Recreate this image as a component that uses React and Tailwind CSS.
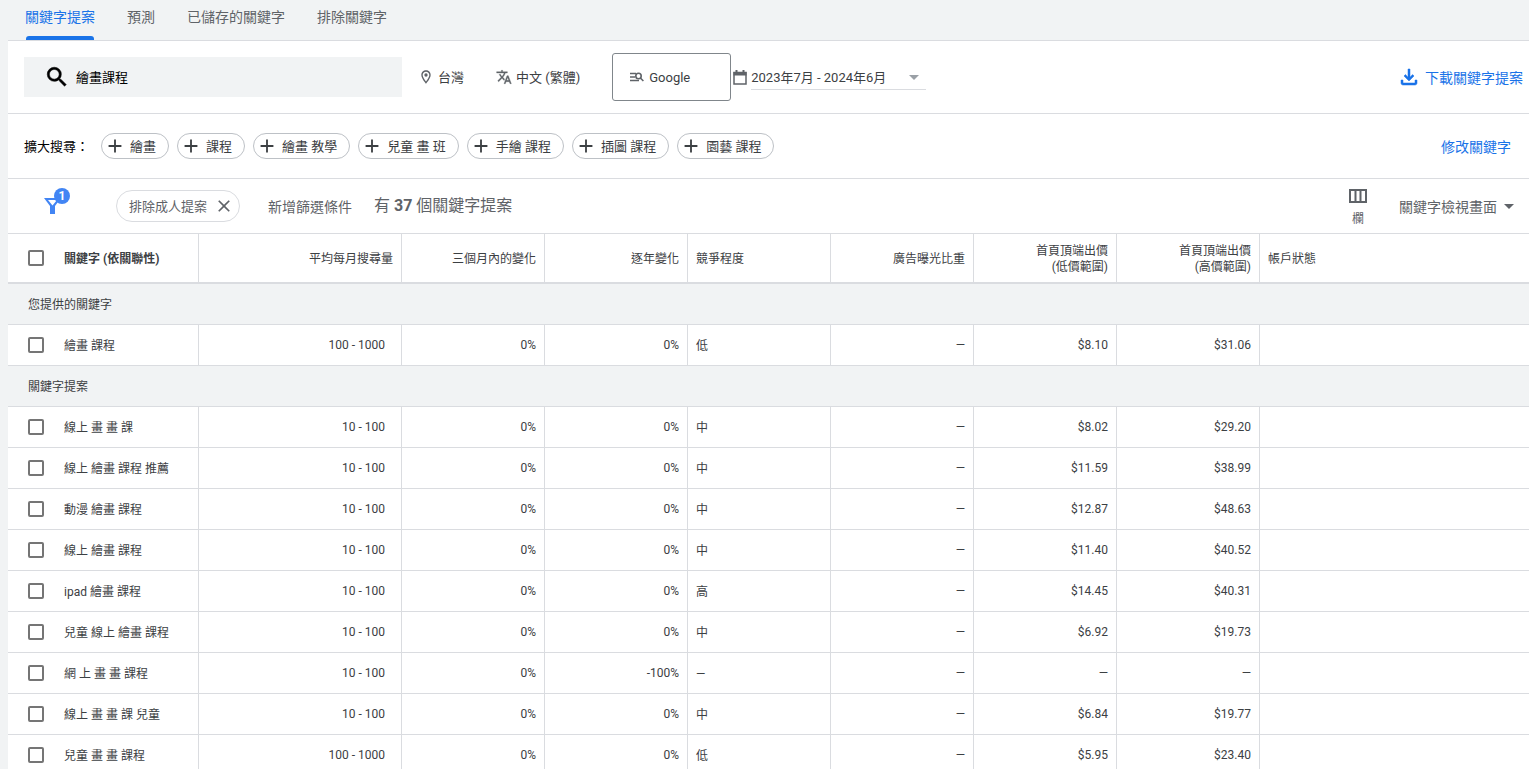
import { useState } from 'react';
import {
    MdSearch,
    MdOutlineLocationOn,
    MdTranslate,
    MdArrowDropDown,
    MdOutlineFileDownload,
    MdAdd,
    MdClose,
} from 'react-icons/md';

const tabs = ['關鍵字提案', '預測', '已儲存的關鍵字', '排除關鍵字'];

const suggestions = ['繪畫', '課程', '繪畫 教學', '兒童 畫 班', '手繪 課程', '插圖 課程', '園藝 課程'];

const provided = [
    { keyword: '繪畫 課程', volume: '100 - 1000', quarter: '0%', year: '0%', competition: '低', low: '$8.10', high: '$31.06' },
];

const ideas = [
    { keyword: '線上 畫 畫 課', volume: '10 - 100', quarter: '0%', year: '0%', competition: '中', low: '$8.02', high: '$29.20' },
    { keyword: '線上 繪畫 課程 推薦', volume: '10 - 100', quarter: '0%', year: '0%', competition: '中', low: '$11.59', high: '$38.99' },
    { keyword: '動漫 繪畫 課程', volume: '10 - 100', quarter: '0%', year: '0%', competition: '中', low: '$12.87', high: '$48.63' },
    { keyword: '線上 繪畫 課程', volume: '10 - 100', quarter: '0%', year: '0%', competition: '中', low: '$11.40', high: '$40.52' },
    { keyword: 'ipad 繪畫 課程', volume: '10 - 100', quarter: '0%', year: '0%', competition: '高', low: '$14.45', high: '$40.31' },
    { keyword: '兒童 線上 繪畫 課程', volume: '10 - 100', quarter: '0%', year: '0%', competition: '中', low: '$6.92', high: '$19.73' },
    { keyword: '網 上 畫 畫 課程', volume: '10 - 100', quarter: '0%', year: '-100%', competition: '—', low: '—', high: '—' },
    { keyword: '線上 畫 畫 課 兒童', volume: '10 - 100', quarter: '0%', year: '0%', competition: '中', low: '$6.84', high: '$19.77' },
    { keyword: '兒童 畫 畫 課程', volume: '100 - 1000', quarter: '0%', year: '0%', competition: '低', low: '$5.95', high: '$23.40' },
];

const checkboxClass =
    'block size-4 shrink-0 appearance-none rounded-[2px] border-2 border-[#757575] bg-white checked:border-[#1a73e8] checked:bg-[#1a73e8]';

function NetworkIcon() {
    return (
        <svg viewBox="0 0 14 10" className="h-[10px] w-[14px]" fill="none" stroke="#5f6368" strokeWidth="1.6" aria-hidden="true">
            <path d="M0 1.5h6M0 5h5M0 8.5h9" />
            <circle cx="8.5" cy="4" r="2.7" />
            <path d="M10.4 6 13.4 9" />
        </svg>
    );
}

function CalendarIcon() {
    return (
        <svg viewBox="0 0 14 15" className="h-[15px] w-[14px]" aria-hidden="true">
            <path d="M1 2.5h12V14H1z" fill="none" stroke="#5f6368" strokeWidth="1.5" />
            <path d="M.5 2h13v3.5H.5zM2.5 0h2v3h-2zM9.5 0h2v3h-2z" fill="#5f6368" />
        </svg>
    );
}

function FilterIcon() {
    return (
        <svg viewBox="0 0 17 16" className="h-4 w-[17px]" aria-hidden="true">
            <path d="M0 0h17l-6 8v8H6V8zM4 2l4.5 5.5L13 2z" fill="#4285f4" fillRule="evenodd" />
        </svg>
    );
}

function ColumnsIcon() {
    return (
        <svg viewBox="0 0 18 14" className="h-[14px] w-[18px]" fill="none" stroke="#5f6368" strokeWidth="2" aria-hidden="true">
            <path d="M1 1h16v12H1zM6.5 1v12M11.5 1v12" />
        </svg>
    );
}

function Tabs() {
    const [active, setActive] = useState(tabs[0]);

    return (
        <nav className="ml-2 flex h-[41px] gap-8 border-b border-[#dadce0] px-[17px] text-sm">
            {tabs.map((tab) => (
                <button
                    key={tab}
                    type="button"
                    onClick={() => setActive(tab)}
                    className={
                        tab === active
                            ? 'relative h-[34px] text-[#1a73e8] after:absolute after:inset-x-px after:-bottom-[6px] after:h-1 after:rounded-t-[3px] after:bg-[#1a73e8]'
                            : 'relative h-[34px] text-[#5f6368]'
                    }
                >
                    {tab}
                </button>
            ))}
        </nav>
    );
}

function SearchBar() {
    return (
        <div className="flex h-[73px] items-center border-b border-[#dadce0] pr-[6px] pl-4 text-[13px] text-[#3c4043]">
            <label className="flex h-10 w-[378px] items-center gap-[6px] bg-[#f1f3f4] pl-5 text-black">
                <MdSearch className="size-[26px] shrink-0 [&>path:last-child]:stroke-[0.5]" />
                <input type="text" aria-label="關鍵字" defaultValue="繪畫課程" className="w-full bg-transparent pt-0.5 outline-none" />
            </label>
            <button type="button" className="ml-4 flex items-center gap-1">
                <MdOutlineLocationOn className="size-4 text-[#5f6368]" />
                <span className="pt-0.5">台灣</span>
            </button>
            <button type="button" className="ml-8 flex items-center gap-1">
                <MdTranslate className="size-4 text-[#5f6368] [&>path:last-child]:stroke-[0.5]" />
                <span className="pt-0.5">中文 (繁體)</span>
            </button>
            <button type="button" className="ml-8 flex h-12 w-[119px] items-center gap-[5px] rounded-[3px] border border-[#80868b] pl-[17px]">
                <NetworkIcon />
                <span className="pt-0.5">Google</span>
            </button>
            <div className="ml-0.5 flex items-center gap-1">
                <CalendarIcon />
                <button type="button" className="flex h-[26px] w-[175px] items-center justify-between border-b border-[#dadce0]">
                    <span className="pt-0.5">2023年7月 - 2024年6月</span>
                    <MdArrowDropDown className="size-6 text-[#9aa0a6]" />
                </button>
            </div>
            <a href="#download" className="ml-auto flex items-center gap-1 text-sm text-[#1a73e8]">
                <MdOutlineFileDownload className="size-6 [&>path:last-child]:stroke-[0.5]" />
                <span className="pt-0.5">下載關鍵字提案</span>
            </a>
        </div>
    );
}

function Suggestions() {
    return (
        <div className="flex h-[65px] items-center border-b border-[#dadce0] pr-[18px] pl-4 text-[13px] text-[#3c4043]">
            <span className="w-[77px] pt-0.5 text-black">擴大搜尋：</span>
            <div className="flex gap-2">
                {suggestions.map((item) => (
                    <button key={item} type="button" className="flex h-[26px] items-center gap-1 rounded-full border border-[#bdc1c6] pr-3 pl-0.5">
                        <MdAdd className="size-[22px]" />
                        <span className="pt-0.5">{item}</span>
                    </button>
                ))}
            </div>
            <a href="#edit" className="ml-auto pt-0.5 text-sm text-[#1a73e8]">
                修改關鍵字
            </a>
        </div>
    );
}

function FilterBar() {
    return (
        <div className="flex h-[55px] items-center border-b border-[#dadce0] pr-2 text-[#5f6368]">
            <button type="button" aria-label="篩選器" className="relative ml-9">
                <FilterIcon />
                <span className="absolute -top-[10px] left-[10px] flex size-4 items-center justify-center rounded-full bg-[#4285f4] text-xs font-bold text-white">
                    1
                </span>
            </button>
            <span className="ml-[55px] flex h-8 items-center gap-[7px] rounded-full border border-[#dadce0] pr-[5px] pl-3 text-[13px]">
                <span className="pt-0.5">排除成人提案</span>
                <button type="button" aria-label="移除">
                    <MdClose className="size-5" />
                </button>
            </span>
            <button type="button" className="ml-7 pt-0.5 text-sm">
                新增篩選條件
            </button>
            <p className="ml-[22px] text-base">
                有 <b className="font-bold">37</b> 個關鍵字提案
            </p>
            <button type="button" className="ml-auto flex flex-col items-center gap-2 pt-1 text-xs">
                <ColumnsIcon />
                欄
            </button>
            <button type="button" className="ml-8 flex items-center text-sm">
                <span className="pt-0.5">關鍵字檢視畫面</span>
                <MdArrowDropDown className="size-6" />
            </button>
        </div>
    );
}

function GroupRow({ title }) {
    return (
        <tr className="h-[41px] bg-[#f1f3f4]">
            <th colSpan={9} scope="colgroup" className="border-b pt-0.5 pl-5 text-left font-normal">
                {title}
            </th>
        </tr>
    );
}

function KeywordRow({ row }) {
    return (
        <tr className="h-[41px] [&>td]:border-b">
            <td className="border-r pl-5">
                <label className="flex items-center gap-5">
                    <input type="checkbox" className={checkboxClass} />
                    <span className="pt-0.5">{row.keyword}</span>
                </label>
            </td>
            <td className="border-r pr-4 text-right">{row.volume}</td>
            <td className="border-r pr-2 text-right">{row.quarter}</td>
            <td className="border-r pr-2 text-right">{row.year}</td>
            <td className="border-r pt-0.5 pl-2">{row.competition}</td>
            <td className="border-r pr-2 text-right">—</td>
            <td className="border-r pr-2 text-right">{row.low}</td>
            <td className="border-r pr-2 text-right">{row.high}</td>
            <td></td>
        </tr>
    );
}

function KeywordTable() {
    return (
        <table className="w-full table-fixed border-separate border-spacing-0 text-xs text-[#3c4043] [&_td]:border-[#dadce0] [&_th]:border-[#dadce0]">
            <colgroup>
                <col className="w-[191px]" />
                <col className="w-[203px]" />
                <col className="w-[143px]" />
                <col className="w-[143px]" />
                <col className="w-[143px]" />
                <col className="w-[143px]" />
                <col className="w-[143px]" />
                <col className="w-[143px]" />
                <col />
            </colgroup>
            <thead>
                <tr className="h-[50px] [&>th]:border-b-2 [&>th]:font-normal [&>th+th]:pt-0.5">
                    <th scope="col" className="border-r pl-5 text-left">
                        <label className="flex items-center gap-5 font-bold">
                            <input type="checkbox" className={checkboxClass} />
                            <span className="pt-0.5">關鍵字 (依關聯性)</span>
                        </label>
                    </th>
                    <th scope="col" className="border-r pr-2 text-right">平均每月搜尋量</th>
                    <th scope="col" className="border-r pr-2 text-right">三個月內的變化</th>
                    <th scope="col" className="border-r pr-2 text-right">逐年變化</th>
                    <th scope="col" className="border-r pl-2 text-left">競爭程度</th>
                    <th scope="col" className="border-r pr-2 text-right">廣告曝光比重</th>
                    <th scope="col" className="border-r pr-2 text-right">首頁頂端出價<br />(低價範圍)</th>
                    <th scope="col" className="border-r pr-2 text-right">首頁頂端出價<br />(高價範圍)</th>
                    <th scope="col" className="pl-2 text-left">帳戶狀態</th>
                </tr>
            </thead>
            <tbody>
                <GroupRow title="您提供的關鍵字" />
                {provided.map((row) => (
                    <KeywordRow key={row.keyword} row={row} />
                ))}
                <GroupRow title="關鍵字提案" />
                {ideas.map((row) => (
                    <KeywordRow key={row.keyword} row={row} />
                ))}
            </tbody>
        </table>
    );
}

function App() {
    return (
        <div lang="zh-Hant" className="min-h-screen bg-[#f1f3f4] font-[Roboto,'Noto_Sans_CJK_TC',sans-serif]">
            <Tabs />
            <main className="ml-2 bg-white">
                <SearchBar />
                <Suggestions />
                <FilterBar />
                <KeywordTable />
            </main>
        </div>
    );
}

export default App;
